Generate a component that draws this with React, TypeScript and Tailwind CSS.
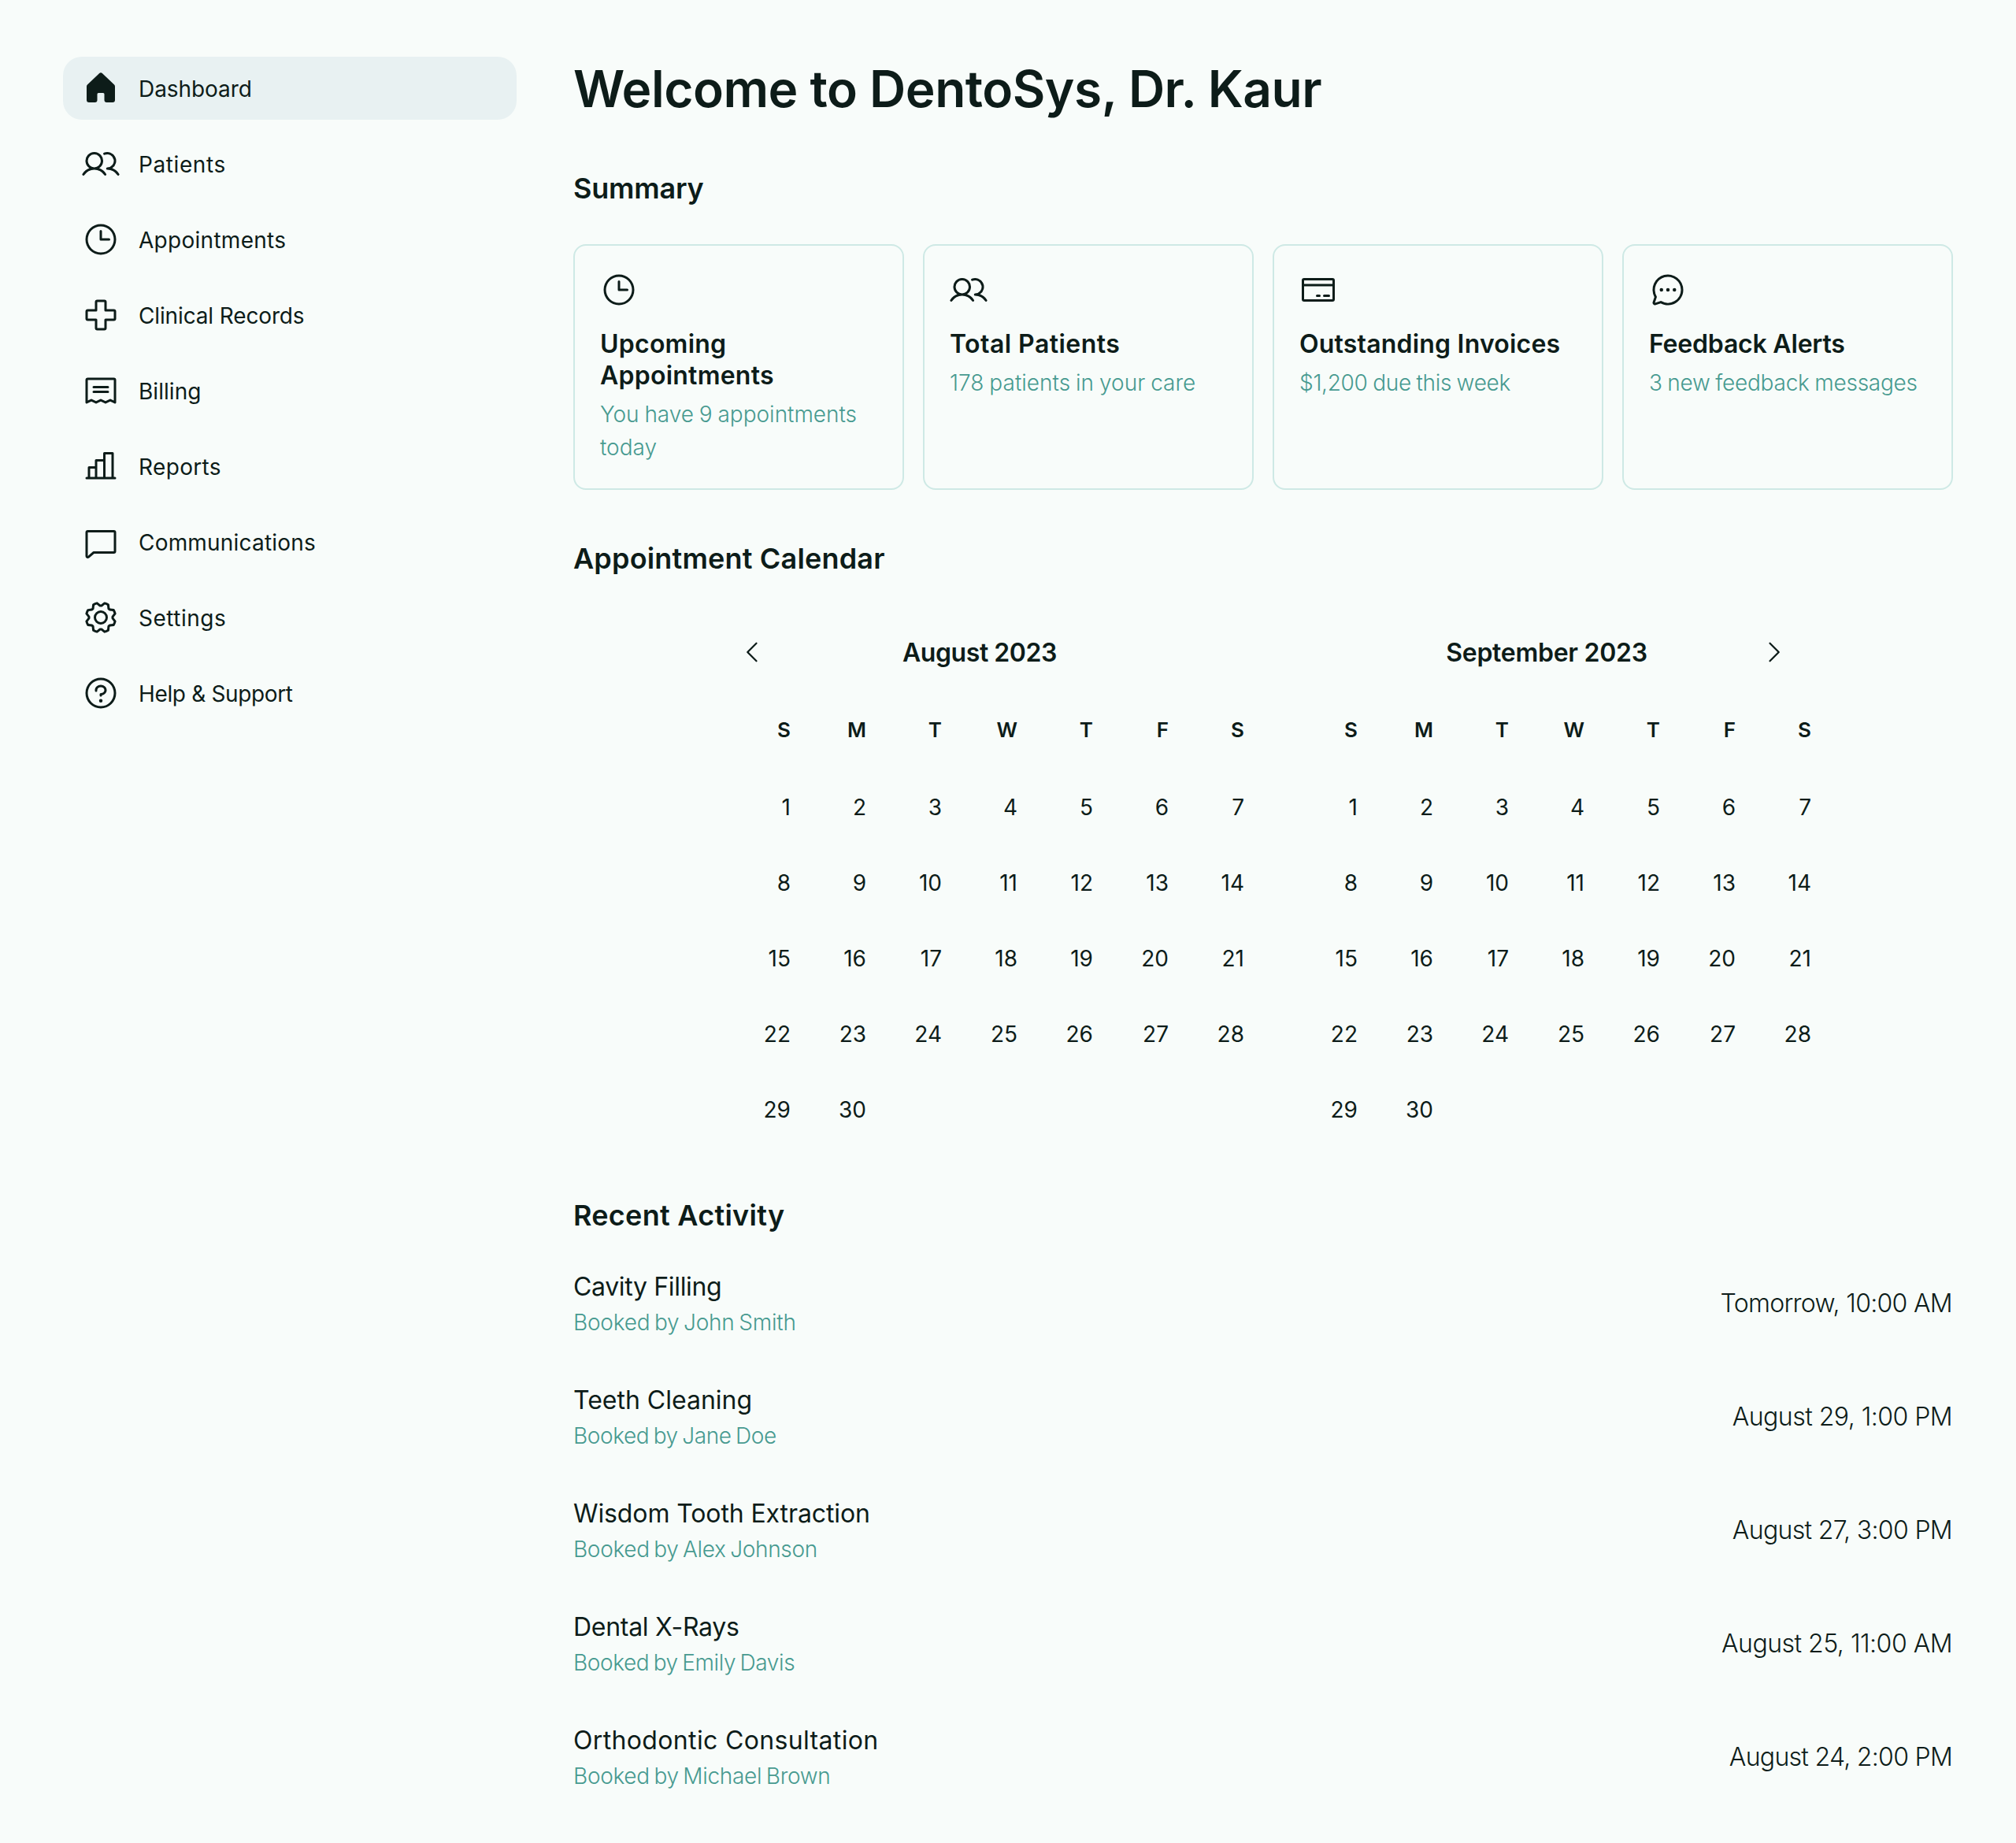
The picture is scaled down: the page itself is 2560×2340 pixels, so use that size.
import type { IconType } from "react-icons";
import {
  PiCaretLeft,
  PiCaretRight,
  PiChartBar,
  PiChat,
  PiChatCircleDots,
  PiClock,
  PiCreditCard,
  PiFirstAid,
  PiGear,
  PiQuestion,
  PiReceipt,
  PiUsers,
} from "react-icons/pi";

function HouseIcon({ className }: { className?: string }) {
  return (
    <svg viewBox="0 0 256 256" width="1em" height="1em" fill="currentColor" className={className}>
      <path d="M224,115.55V208a16,16,0,0,1-16,16H168a16,16,0,0,1-16-16V168a8,8,0,0,0-8-8H112a8,8,0,0,0-8,8v40a16,16,0,0,1-16,16H48a16,16,0,0,1-16-16V115.55a16,16,0,0,1,5.17-11.78l80-75.48.11-.11a16,16,0,0,1,21.53,0,1.14,1.14,0,0,0,.11.11l80,75.48A16,16,0,0,1,224,115.55Z" />
    </svg>
  );
}

type NavItem = {
  label: string;
  icon: IconType | typeof HouseIcon;
  tracking: string;
  active?: boolean;
};

const navItems: NavItem[] = [
  { label: "Dashboard", icon: HouseIcon, tracking: "tracking-[-0.08px]", active: true },
  { label: "Patients", icon: PiUsers, tracking: "tracking-[0.6px]" },
  { label: "Appointments", icon: PiClock, tracking: "tracking-[0.28px]" },
  { label: "Clinical Records", icon: PiFirstAid, tracking: "tracking-[-0.14px]" },
  { label: "Billing", icon: PiReceipt, tracking: "tracking-[0.05px]" },
  { label: "Reports", icon: PiChartBar, tracking: "tracking-[0.35px]" },
  { label: "Communications", icon: PiChat, tracking: "tracking-[0.2px]" },
  { label: "Settings", icon: PiGear, tracking: "tracking-[0.51px]" },
  { label: "Help & Support", icon: PiQuestion, tracking: "tracking-[-0.35px]" },
];

const cards = [
  {
    title: "Upcoming Appointments",
    detail: "You have 9 appointments today",
    icon: PiClock,
    titleTracking: "tracking-[0.24px]",
    detailTracking: "tracking-[-0.02px]",
  },
  {
    title: "Total Patients",
    detail: "178 patients in your care",
    icon: PiUsers,
    titleTracking: "tracking-[0.45px]",
    detailTracking: "tracking-[0.02px]",
  },
  {
    title: "Outstanding Invoices",
    detail: "$1,200 due this week",
    icon: PiCreditCard,
    titleTracking: "tracking-[0.2px]",
    detailTracking: "tracking-[-0.3px]",
  },
  {
    title: "Feedback Alerts",
    detail: "3 new feedback messages",
    icon: PiChatCircleDots,
    titleTracking: "tracking-[-0.2px]",
    detailTracking: "tracking-[-0.24px]",
  },
];

const activities = [
  {
    title: "Cavity Filling",
    by: "Booked by John Smith",
    time: "Tomorrow, 10:00 AM",
    titleTracking: "tracking-[-0.34px]",
    byTracking: "tracking-[-0.22px]",
    timeTracking: "tracking-[-0.69px]",
  },
  {
    title: "Teeth Cleaning",
    by: "Booked by Jane Doe",
    time: "August 29, 1:00 PM",
    titleTracking: "tracking-[0px]",
    byTracking: "tracking-[-0.4px]",
    timeTracking: "tracking-[-0.53px]",
  },
  {
    title: "Wisdom Tooth Extraction",
    by: "Booked by Alex Johnson",
    time: "August 27, 3:00 PM",
    titleTracking: "tracking-[-0.11px]",
    byTracking: "tracking-[-0.32px]",
    timeTracking: "tracking-[-0.66px]",
  },
  {
    title: "Dental X-Rays",
    by: "Booked by Emily Davis",
    time: "August 25, 11:00 AM",
    titleTracking: "tracking-[-0.28px]",
    byTracking: "tracking-[-0.4px]",
    timeTracking: "tracking-[-0.5px]",
  },
  {
    title: "Orthodontic Consultation",
    by: "Booked by Michael Brown",
    time: "August 24, 2:00 PM",
    titleTracking: "tracking-[0.35px]",
    byTracking: "tracking-[-0.3px]",
    timeTracking: "tracking-[-0.71px]",
  },
];

const weekdays = ["S", "M", "T", "W", "T", "F", "S"];
const days = Array.from({ length: 30 }, (_, i) => i + 1);

function Sidebar() {
  return (
    <nav className="flex w-[576px] shrink-0 flex-col gap-4">
      {navItems.map(({ label, icon: Icon, tracking, active }) => (
        <a
          key={label}
          className={`flex h-20 items-center gap-6 rounded-3xl px-6 ${active ? "bg-[#e8f1f2]" : ""}`}
        >
          <Icon className="size-12 shrink-0" />
          <span className={`pt-0.5 text-[28px] leading-[42px] whitespace-nowrap ${tracking}`}>{label}</span>
        </a>
      ))}
    </nav>
  );
}

function Month({ name, tracking, side }: { name: string; tracking: string; side: "left" | "right" }) {
  return (
    <div className="w-[672px]">
      <div className="flex h-[81px] justify-between px-[30px]">
        <button className="flex h-20 w-9 items-center">
          {side === "left" && <PiCaretLeft className="size-9" />}
        </button>
        <p className={`text-[32px] leading-[81px] font-semibold ${tracking}`}>{name}</p>
        <button className="flex h-20 w-9 items-center">
          {side === "right" && <PiCaretRight className="size-9" />}
        </button>
      </div>
      <div className="mt-[9px] grid grid-cols-7 text-right text-[26px] leading-[97px] font-semibold">
        {weekdays.map((d, i) => (
          <span key={i}>{d}</span>
        ))}
      </div>
      <div className="mt-0.5 grid grid-cols-7 text-right text-[28px] leading-[96px]">
        {days.map((d) => (
          <span key={d}>{d}</span>
        ))}
      </div>
    </div>
  );
}

export default function App() {
  return (
    <div className="flex h-[2340px] w-[2560px] gap-[72px] overflow-hidden bg-[#f8fcfa] px-20 pt-[72px] font-['Inter',sans-serif] text-[#0d1c19]">
      <Sidebar />
      <main className="flex flex-1 flex-col">
        <h1 className="text-[64px] leading-[81px] font-semibold tracking-[-0.5px]">
          Welcome to DentoSys, Dr. Kaur
        </h1>

        <h2 className="mt-[62px] text-[36px] leading-[48px] font-semibold tracking-[-0.2px]">Summary</h2>
        <div className="mt-[47px] grid grid-cols-4 gap-6">
          {cards.map(({ title, detail, icon: Icon, titleTracking, detailTracking }) => (
            <div key={title} className="h-[312px] rounded-2xl border-2 border-[#cee9e5] p-8">
              <Icon className="size-12" />
              <h3 className={`mt-[25px] text-[32px] leading-[40px] font-semibold ${titleTracking}`}>{title}</h3>
              <p
                className={`mt-2 text-[28px] leading-[42px] font-light text-[#479a90] [word-spacing:-1px] ${detailTracking}`}
              >
                {detail}
              </p>
            </div>
          ))}
        </div>

        <h2 className="mt-[63px] text-[36px] leading-[48px] font-semibold tracking-[0.18px]">
          Appointment Calendar
        </h2>
        <div className="mt-[55px] flex justify-center gap-12">
          <Month name="August 2023" tracking="tracking-[-0.44px]" side="left" />
          <Month name="September 2023" tracking="tracking-[-0.28px]" side="right" />
        </div>

        <h2 className="mt-[62px] text-[36px] leading-[48px] font-semibold tracking-[0.27px]">
          Recent Activity
        </h2>
        <div className="mt-4 flex flex-col">
          {activities.map((a) => (
            <div key={a.title} className="flex h-36 items-center justify-between">
              <div>
                <p className={`text-[32px] leading-[47px] ${a.titleTracking}`}>{a.title}</p>
                <p
                  className={`mt-px text-[28px] leading-[42px] font-light text-[#479a90] [word-spacing:-2px] ${a.byTracking}`}
                >
                  {a.by}
                </p>
              </div>
              <p className={`pr-px pb-px text-[32px] leading-[48px] font-light ${a.timeTracking}`}>{a.time}</p>
            </div>
          ))}
        </div>
      </main>
    </div>
  );
}
